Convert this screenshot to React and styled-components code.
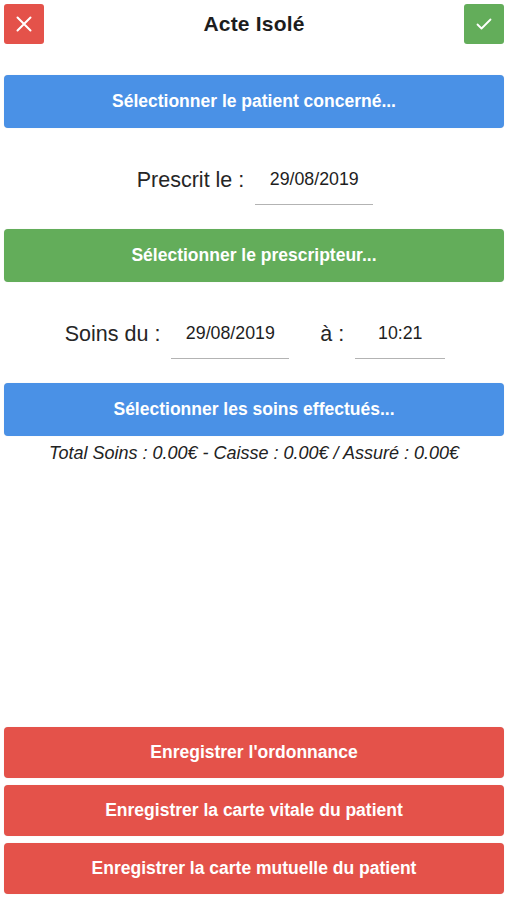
import styled, { createGlobalStyle } from 'styled-components';

const GlobalStyle = createGlobalStyle`
  html, body {
    margin: 0;
    padding: 0;
    background: #ffffff;
  }
  body {
    font-family: "Liberation Sans", Arial, sans-serif;
  }
  * {
    box-sizing: border-box;
  }
`;

const colors = {
  red: '#e4524a',
  green: '#63ad5a',
  blue: '#4a91e6',
};

function App() {
  return (
    <>
      <GlobalStyle />
      <Page>
        <Header>
          <IconButton $color={colors.red}>
            <svg width="16" height="16" viewBox="0 0 16 16">
              <path d="M1.5 1.5 L14.5 14.5 M14.5 1.5 L1.5 14.5" stroke="#fff" strokeWidth="2" strokeLinecap="round" />
            </svg>
          </IconButton>
          <Title>Acte Isolé</Title>
          <IconButton $color={colors.green}>
            <svg width="16" height="12" viewBox="0 0 16 12">
              <path d="M1.5 6.5 L5.5 10.5 L14.5 1.5" stroke="#fff" strokeWidth="1.8" fill="none" strokeLinecap="round" strokeLinejoin="round" />
            </svg>
          </IconButton>
        </Header>

        <ActionButton $color={colors.blue} $top={31}>Sélectionner le patient concerné...</ActionButton>

        <FieldRow>
          <Label>Prescrit le :</Label>
          <DateField $width={118}>29/08/2019</DateField>
        </FieldRow>

        <ActionButton $color={colors.green}>Sélectionner le prescripteur...</ActionButton>

        <FieldRow>
          <Label>Soins du :</Label>
          <DateField $width={118}>29/08/2019</DateField>
          <Label $left={31}>à :</Label>
          <DateField $width={90}>10:21</DateField>
        </FieldRow>

        <ActionButton $color={colors.blue}>Sélectionner les soins effectués...</ActionButton>
        <Total>Total Soins : 0.00€ - Caisse : 0.00€ / Assuré : 0.00€</Total>

        <Spacer />

        <Footer>
          <ActionButton $color={colors.red} $height={51}>Enregistrer l'ordonnance</ActionButton>
          <ActionButton $color={colors.red} $height={51}>Enregistrer la carte vitale du patient</ActionButton>
          <ActionButton $color={colors.red} $height={51}>Enregistrer la carte mutuelle du patient</ActionButton>
        </Footer>
      </Page>
    </>
  );
}
export default App;

const Page = styled.div`
  min-height: 100vh;
  display: flex;
  flex-direction: column;
  padding: 4px 3px 6px 4px;
`;

const Header = styled.header`
  display: flex;
  justify-content: space-between;
  align-items: center;
  height: 40px;
`;

const IconButton = styled.button`
  display: flex;
  align-items: center;
  justify-content: center;
  width: 40px;
  height: 40px;
  border: 0;
  border-radius: 3px;
  background-color: ${(p) => p.$color};
  padding: 0;
`;

const Title = styled.h1`
  margin: 0;
  font-size: 21px;
  font-weight: 700;
  color: #1d1d1d;
  letter-spacing: 0.2px;
`;

const ActionButton = styled.button`
  display: flex;
  align-items: center;
  justify-content: center;
  width: 100%;
  height: ${(p) => p.$height || 53}px;
  margin-top: ${(p) => p.$top || 0}px;
  border: 0;
  border-radius: 4px;
  background-color: ${(p) => p.$color};
  color: #ffffff;
  font-family: "Liberation Sans", Arial, sans-serif;
  font-size: 17.5px;
  font-weight: 700;
  box-shadow: 0 0 1px rgba(0, 0, 0, 0.15);
`;

const FieldRow = styled.div`
  display: flex;
  justify-content: center;
  align-items: center;
  height: 101px;
  padding-left: 2px;
`;

const Label = styled.span`
  font-size: 21.5px;
  color: #262626;
  margin-left: ${(p) => p.$left || 0}px;
  margin-right: 8px;
  padding-top: 4px;
`;

const DateField = styled.div`
  display: flex;
  align-items: center;
  justify-content: center;
  width: ${(p) => p.$width}px;
  height: 48px;
  margin-top: 4px;
  border-bottom: 1.5px solid #b3b3b3;
  font-size: 17.8px;
  color: #1e1e1e;
  padding-bottom: 2px;
  margin-left: 3px;
`;

const Total = styled.p`
  margin: 7px 0 0;
  text-align: center;
  font-style: italic;
  font-size: 18px;
  color: #222222;
`;

const Spacer = styled.div`
  flex: 1;
`;

const Footer = styled.div`
  display: flex;
  flex-direction: column;
  gap: 7px;
`;
